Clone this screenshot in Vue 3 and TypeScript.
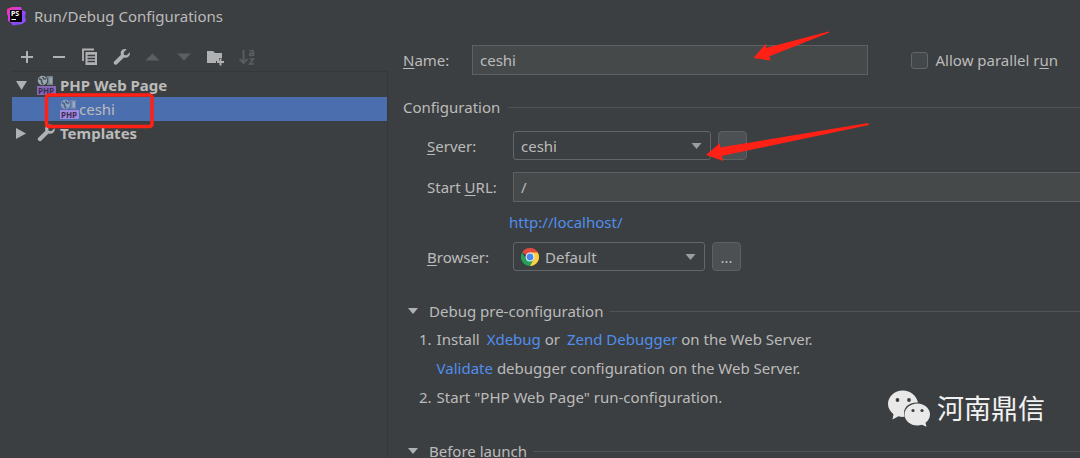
<script setup lang="ts">
import { ref } from 'vue'

const name = ref('ceshi')
const server = ref('ceshi')
const startUrl = ref('/')
const browser = ref('Default')
const parallel = ref(false)
</script>

<template>
  <div class="dialog">
    <header class="titlebar">
      <svg class="logo" viewBox="0 0 20 20" aria-hidden="true">
        <defs>
          <linearGradient id="psg" x1="0" y1="0" x2="1" y2="1">
            <stop offset="0" stop-color="#ff318c" />
            <stop offset="0.35" stop-color="#d63be0" />
            <stop offset="0.7" stop-color="#7a4dff" />
            <stop offset="1" stop-color="#b74af7" />
          </linearGradient>
        </defs>
        <path d="M1 3 6 1l9 0 1 3 4 2-1 5 1 4-4 3-9 1.500-2-2.500-3-2 0-5-1-2z" fill="url(#psg)" />
        <rect x="4" y="4" width="12" height="12" fill="#080408" />
        <text x="5" y="10" class="logo-text">PS</text>
        <path d="M5.500 13.500h4.500" stroke="#fff" stroke-width="1" />
      </svg>
      <h1>Run/Debug Configurations</h1>
    </header>

    <div class="body">
      <aside class="side">
        <div class="toolbar">
          <button type="button" aria-label="Add">
            <svg viewBox="0 0 18 18"><path d="M9 3v12M3 9h12" stroke="#afb1b3" stroke-width="2" /></svg>
          </button>
          <button type="button" aria-label="Remove">
            <svg viewBox="0 0 18 18"><path d="M3 9h12" stroke="#afb1b3" stroke-width="2" /></svg>
          </button>
          <button type="button" aria-label="Copy">
            <svg viewBox="0 0 18 18">
              <path d="M2 13V1.500h11" fill="none" stroke="#afb1b3" stroke-width="1.800" />
              <path d="M4.500 4h11.500v13H4.500z" fill="#afb1b3" />
              <path d="M6.500 7.500h7.500M6.500 10.500h7.500M6.500 13.500h7.500" stroke="#3c3f41" stroke-width="1.300" />
            </svg>
          </button>
          <button type="button" aria-label="Edit templates">
            <svg viewBox="0 0 18 18"><path d="M16.700 4.300 13.800 7.200 11 6.900 10.700 4.200 13.700 1.300C11.500.4 9.200 1.100 8.200 3c-.7 1.300-.7 2.600-.2 3.800L1.200 13.600c-1.600 1.700.9 4.400 2.800 2.700l6.900-6.900c1.500.6 3.200.3 4.400-.7 1.400-1.100 1.900-2.800 1.400-4.400z" fill="#afb1b3" /></svg>
          </button>
          <button type="button" aria-label="Move up" disabled>
            <svg viewBox="0 0 18 18"><path d="M1.500 12.500 8.500 5.500l7 7z" fill="#5c5e60" /></svg>
          </button>
          <button type="button" aria-label="Move down" disabled>
            <svg viewBox="0 0 18 18"><path d="M1 5.500h14l-7 7z" fill="#5c5e60" /></svg>
          </button>
          <button type="button" aria-label="New folder">
            <svg viewBox="0 0 18 18">
              <path d="M0 3h6l2 2h7v5h-3v3H9v2H0z" fill="#afb1b3" />
              <path d="M13.500 10.500v7M10 14h7" stroke="#afb1b3" stroke-width="2" />
            </svg>
          </button>
          <button type="button" aria-label="Sort configurations" disabled>
            <svg viewBox="0 0 18 18">
              <path d="M4.500 2v13M.5 11l4 4 4-4" fill="none" stroke="#5c5e60" stroke-width="1.800" />
              <path d="M10.500 3q4-1.500 4 1v4M14.500 5q-4-.3-4 1.500t4 .5M10.500 11h4l-4 5h4.500" fill="none" stroke="#5c5e60" stroke-width="1.500" />
            </svg>
          </button>
        </div>

        <ul class="tree">
          <li class="row bold">
            <svg class="twist" viewBox="0 0 12 12"><path d="M0 1h12L6 11z" fill="#afb1b3" /></svg>
            <svg class="php" viewBox="0 0 19 20">
              <path d="M9.500 1H16v9H9.500q3-4.500 0-9z" fill="#76838b" />
              <path d="M12.500 2.500H15v6h-2.500z" fill="#9aa7b0" />
              <circle cx="5.500" cy="5.500" r="4.700" fill="#9aa7b0" />
              <path d="M2 3.500 4.500 5v2L6 9.500M5.500 2 7 4h2" fill="none" stroke="#485056" stroke-width="1.500" />
              <rect y="11" width="19" height="9" fill="#8768b5" />
              <text x="1" y="19" class="php-text">PHP</text>
            </svg>
            <span>PHP Web Page</span>
          </li>
          <li class="row child selected">
            <svg class="php" viewBox="0 0 19 20">
              <path d="M9.500 1H16v9H9.500q3-4.500 0-9z" fill="#6e84ae" />
              <path d="M12.500 2.500H15v6h-2.500z" fill="#9aaabf" />
              <circle cx="5.500" cy="5.500" r="4.700" fill="#8e9fb9" />
              <path d="M2 3.500 4.500 5v2L6 9.500M5.500 2 7 4h2" fill="none" stroke="#46608f" stroke-width="1.500" />
              <rect y="11" width="19" height="9" fill="#a189dc" />
              <text x="1" y="19" class="php-text">PHP</text>
            </svg>
            <span>ceshi</span>
          </li>
          <li class="row bold">
            <svg class="twist" viewBox="0 0 12 12"><path d="M0 0v12l11-6z" fill="#afb1b3" /></svg>
            <svg class="php" viewBox="0 0 18 18"><path d="M16.700 4.300 13.800 7.200 11 6.900 10.700 4.200 13.700 1.300C11.500.4 9.200 1.100 8.200 3c-.7 1.300-.7 2.600-.2 3.800L1.200 13.600c-1.600 1.700.9 4.400 2.800 2.700l6.900-6.900c1.500.6 3.200.3 4.400-.7 1.400-1.100 1.900-2.800 1.400-4.400z" fill="#afb1b3" /></svg>
            <span>Templates</span>
          </li>
        </ul>
      </aside>

      <main class="form">
        <div class="name-row">
          <label for="name"><u>N</u>ame:</label>
          <input id="name" v-model="name" class="field" type="text" />
          <label class="check"><input v-model="parallel" type="checkbox" /><span>Allow parallel r<u>u</u>n</span></label>
        </div>

        <h2 class="section first">Configuration</h2>

        <div class="grid">
          <label for="server"><u>S</u>erver:</label>
          <div class="controls">
            <div class="combo server">
              <select id="server" v-model="server"><option>ceshi</option></select>
              <svg class="caret" viewBox="0 0 10 6"><path d="M0 0h10L5 6z" fill="#9b9ea0" /></svg>
            </div>
            <button type="button" class="more" aria-label="Manage servers"></button>
          </div>

          <label for="url">Start <u>U</u>RL:</label>
          <input id="url" v-model="startUrl" class="field url" type="text" />

          <a class="preview" href="http://localhost/">http://localhost/</a>

          <label for="browser"><u>B</u>rowser:</label>
          <div class="controls">
            <div class="combo browser">
              <svg class="chrome" viewBox="0 0 18 18">
                <path d="M9 9 1.200 4.500A9 9 0 0 1 16.800 4.500z" fill="#e34a3f" />
                <path d="M9 9V4.500h7.800A9 9 0 0 1 9 18z" fill="#fdd041" />
                <path d="M9 9l3.900 2.300L9 18A9 9 0 0 1 1.200 4.500L5.100 11z" fill="#24a05a" />
                <circle cx="9" cy="9" r="4.500" fill="#f1f3f4" />
                <circle cx="9" cy="9" r="3.400" fill="#4688ef" />
              </svg>
              <select id="browser" v-model="browser"><option>Default</option></select>
              <svg class="caret" viewBox="0 0 10 6"><path d="M0 0h10L5 6z" fill="#9b9ea0" /></svg>
            </div>
            <button type="button" class="more" aria-label="Manage browsers">...</button>
          </div>
        </div>

        <h2 class="section fold">
          <svg class="caret-fold" viewBox="0 0 10 6"><path d="M0 0h10L5 6z" fill="#afb1b3" /></svg>
          <span>Debug pre-configuration</span>
        </h2>
        <ol class="steps">
          <li>
            <span>1.</span>
            <p>Install <a class="spaced" href="#xdebug">Xdebug</a> or <a class="spaced" href="#zend">Zend Debugger</a> on the Web Server.<br /><a href="#validate">Validate</a> debugger configuration on the Web Server.</p>
          </li>
          <li><span>2.</span><p>Start "PHP Web Page" run-configuration.</p></li>
        </ol>

        <h2 class="section fold">
          <svg class="caret-fold" viewBox="0 0 10 6"><path d="M0 0h10L5 6z" fill="#afb1b3" /></svg>
          <span>Before launch</span>
        </h2>
      </main>
    </div>

    <svg class="marks" viewBox="0 0 1080 458" aria-hidden="true">
      <rect x="46.500" y="95" width="105.500" height="31.500" rx="2.500" fill="none" stroke="#ff2116" stroke-width="3.500" />
      <path d="M753.500 58 766 43.500 766 48 828.500 31.500 829.500 32.500 769 56.500 771 60.500z" fill="#ff2116" />
      <path d="M706 155 720 143 720 147.500 868 123 869 125 721.500 156 723.500 161z" fill="#ff2116" />
    </svg>

    <div class="watermark">
      <svg viewBox="0 0 42 36" aria-hidden="true">
        <path d="M15 0C6.500 0 0 6 0 13.500c0 4 2.200 7.600 5.500 10.200L4.500 29l6-3.200c2 .6 4 .7 6 .5C14 17 21 11.500 30 12 28.500 5 22.500 0 15 0z" fill="#e9e9e9" />
        <path d="M29.500 13C22 13 16.500 18 16.500 24S22 35 29.500 35c1.600 0 3-.2 4.400-.7l4.600 2-1-4C40 30.300 42 27.400 42 24c0-6-5.500-11-12.500-11z" fill="#e9e9e9" />
        <g fill="#3c3f41"><circle cx="9.500" cy="9.500" r="1.900" /><circle cx="21" cy="9.500" r="1.900" /><circle cx="25" cy="20" r="1.600" /><circle cx="34" cy="20" r="1.600" /></g>
      </svg>
      <span>河南鼎信</span>
    </div>
  </div>
</template>

<style>
html, body { margin: 0; background: #3c3f41; }
</style>

<style scoped>
* { box-sizing: border-box; }
.dialog {
  position: relative;
  height: 100vh;
  overflow: hidden;
  display: flex;
  flex-direction: column;
  background: #3c3f41;
  color: #bbbbbb;
  font: 15px/20px "Noto Sans", "Noto Sans CJK SC", sans-serif;
}
button, input, select { font: inherit; color: inherit; margin: 0; }
h1, h2, p, ul, ol { margin: 0; padding: 0; font-size: inherit; font-weight: 400; list-style: none; }
a { color: #508eee; text-decoration: none; }
u { text-underline-offset: 2px; }
.titlebar { display: flex; align-items: center; gap: 8px; height: 32px; padding-left: 6px; }
.logo { width: 20px; height: 20px; }
.logo-text { font: bold 7px "Noto Sans", sans-serif; fill: #fff; }
.body { flex: 1; display: flex; min-height: 0; }
.side { flex: 0 0 388px; display: flex; flex-direction: column; padding-left: 12px; }
.toolbar { display: grid; grid-template-columns: repeat(8, 1fr); width: 252px; height: 39px; padding-top: 12px; }
.toolbar button { height: 27px; padding: 0 0 0 6px; border: 0; background: none; display: flex; align-items: flex-start; }
.toolbar svg { width: 18px; height: 26px; }
.tree { flex: 1; padding-top: 1px; border-top: 1px solid #35383a; border-right: 1px solid #35383a; }
.row { display: flex; align-items: center; height: 24px; padding-left: 4px; }
.bold { font-weight: 700; }
.child { padding-left: 48px; }
.selected { background: #4b6eaf; }
.twist { width: 11px; height: 11px; margin-right: 10px; }
.php { width: 19px; height: 20px; margin-right: 4px; overflow: visible; }
.child .php { margin-right: 0; }
.php-text { font: bold 8px "Noto Sans", sans-serif; fill: #3a2d56; }
.form { flex: 1; min-width: 0; padding: 13px 0 0 15px; }
.name-row { display: flex; align-items: center; padding-right: 22px; }
.name-row > label:first-child { width: 69px; }
.field { height: 30px; padding: 0 7px; border: 1px solid #5e6162; border-radius: 0; background: #45494a; outline: 0; }
.name-row .field { flex: 1; min-width: 0; }
.check { display: flex; align-items: center; gap: 8px; margin-left: 43px; }
.check input { appearance: none; width: 17px; height: 17px; border: 1px solid #646769; border-radius: 3px; background: #43494a; }
.section { display: flex; align-items: center; gap: 8px; }
.section::after { content: ""; flex: 1; height: 1px; background: #515355; }
.first { margin-top: 22px; }
.grid { display: grid; grid-template-columns: 86px 1fr; align-items: center; padding: 14px 0 0 24px; }
.controls { display: flex; gap: 7px; }
.combo { position: relative; height: 29px; }
.combo select { appearance: none; width: 100%; height: 100%; padding: 0 7px; border: 1px solid #646769; border-radius: 3px; background: #3c3f41; outline: 0; }
.server { width: 198px; }
.browser { width: 192px; }
.browser select { padding-left: 31px; }
.caret { position: absolute; right: 9px; top: 12px; width: 11px; height: 6px; pointer-events: none; }
.chrome { position: absolute; left: 8px; top: 6px; width: 18px; height: 18px; pointer-events: none; }
.more { width: 29px; height: 29px; padding: 0; border: 1px solid #5e6163; border-radius: 4px; background: #4c5052; }
.url { margin-top: 12px; border-right: 0; min-width: 0; }
.grid label[for="url"] { margin-top: 12px; }
.preview { grid-column: 2; justify-self: start; margin: 10px 0 10px -4px; }
.fold { gap: 6px; margin-top: 30px; padding-left: 4px; }
.caret-fold { width: 12px; height: 6px; margin-right: 4px; }
.steps { margin-top: 4px; padding-left: 16px; line-height: 29px; }
.steps li { display: flex; gap: 5px; }
.spaced { margin-left: 3px; }
.steps + .fold { margin-top: 29px; }
.marks { position: absolute; left: 0; top: 0; width: 1080px; height: 458px; pointer-events: none; }
.watermark { position: absolute; right: 35px; bottom: 30px; display: flex; align-items: center; gap: 7px; color: #f2f2f2; font: 27px/40px "Noto Sans CJK SC", sans-serif; }
.watermark svg { width: 42px; height: 37px; }
</style>
